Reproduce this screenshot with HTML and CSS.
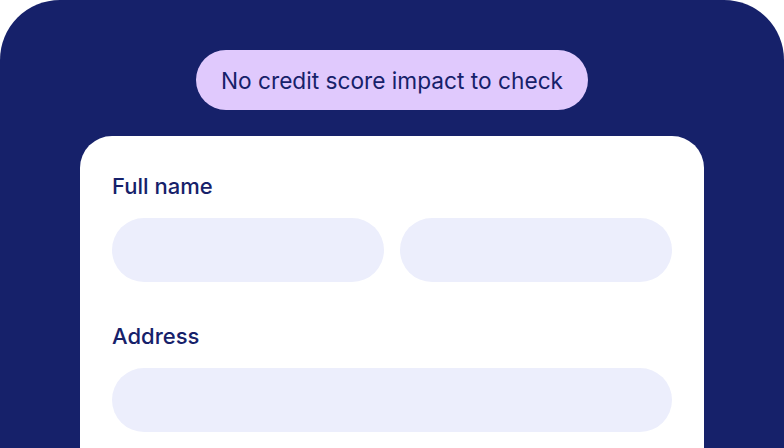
FILE: index.html
```html
<!DOCTYPE html>
<html lang="en">
<head>
    <meta charset="UTF-8">
    <meta name="viewport" content="width=device-width, initial-scale=1.0">
    <title>Check your rate</title>
    <link rel="stylesheet" href="styles.css">
</head>
<body>
    <div class="hero">
        <div class="badge">No credit score impact to check</div>

        <div class="card">
            <div class="field">
                <label>Full name</label>
                <div class="row">
                    <div class="input"></div>
                    <div class="input"></div>
                </div>
            </div>

            <div class="field">
                <label>Address</label>
                <div class="row">
                    <div class="input"></div>
                </div>
            </div>
        </div>
    </div>
</body>
</html>
```

FILE: styles.css
```css
body {
    font-family: Inter, "Noto Sans", sans-serif;
    margin: 0;
    padding: 0;
    background-color: #fff;
    color: #16216a;
}

.hero {
    height: 448px;
    box-sizing: border-box;
    background-color: #16216a;
    border-radius: 60px 60px 0 0;
    padding-top: 50px;
    display: flex;
    flex-direction: column;
    align-items: center;
    overflow: hidden;
}

.badge {
    flex-shrink: 0;
    height: 60px;
    padding: 0 25px;
    border-radius: 30px;
    background-color: #e0c9fd;
    display: flex;
    align-items: center;
    font-size: 22.7px;
    margin-bottom: 26px;
}

.card {
    width: 624px;
    flex-grow: 1;
    flex-shrink: 0;
    box-sizing: border-box;
    background-color: #fff;
    border-radius: 32px 32px 0 0;
    padding: 36px 32px 0;
}

.field {
    margin-bottom: 40px;
}

.field label {
    display: block;
    font-size: 22px;
    font-weight: 500;
    line-height: 28px;
    margin-bottom: 18px;
}

.row {
    display: flex;
    gap: 16px;
}

.input {
    flex: 1;
    height: 64px;
    border-radius: 32px;
    background-color: #eceefc;
}
```
